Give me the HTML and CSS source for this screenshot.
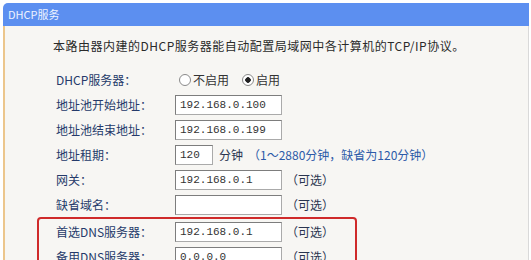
FILE: index.html
```html
<!DOCTYPE html>
<html lang="zh-CN">
<head>
    <meta charset="UTF-8">
    <title>DHCP服务</title>
    <link rel="stylesheet" href="styles.css">
</head>
<body>
    <div class="panel">
        <div class="panel-header">DHCP服务</div>
        <div class="panel-body">
            <p class="intro">本路由器内建的DHCP服务器能自动配置局域网中各计算机的TCP/IP协议。</p>

            <div class="row">
                <label class="label">DHCP服务器：</label>
                <label class="radio"><input type="radio" name="dhcp">不启用</label>
                <label class="radio"><input type="radio" name="dhcp" checked>启用</label>
            </div>
            <div class="row">
                <label class="label">地址池开始地址：</label>
                <input class="field" type="text" value="192.168.0.100">
            </div>
            <div class="row">
                <label class="label">地址池结束地址：</label>
                <input class="field" type="text" value="192.168.0.199">
            </div>
            <div class="row">
                <label class="label">地址租期：</label>
                <input class="field short" type="text" value="120">
                <span class="unit">分钟</span>
                <span class="hint">（1～2880分钟，缺省为120分钟）</span>
            </div>
            <div class="row">
                <label class="label">网关：</label>
                <input class="field" type="text" value="192.168.0.1">
                <span class="note">（可选）</span>
            </div>
            <div class="row">
                <label class="label">缺省域名：</label>
                <input class="field" type="text" value="">
                <span class="note">（可选）</span>
            </div>

            <!-- highlighted DNS settings -->
            <div class="highlight">
                <div class="row">
                    <label class="label">首选DNS服务器：</label>
                    <input class="field" type="text" value="192.168.0.1">
                    <span class="note">（可选）</span>
                </div>
                <div class="row">
                    <label class="label">备用DNS服务器：</label>
                    <input class="field" type="text" value="0.0.0.0">
                    <span class="note">（可选）</span>
                </div>
            </div>
        </div>
    </div>
</body>
</html>
```

FILE: styles.css
```css
body {
    margin: 0;
    padding: 3px 2px 0 3px;
    background: #ffffff;
    font-family: "Noto Sans CJK SC", "Noto Sans", sans-serif;
    font-size: 12px;
    color: #2a3550;
}
.panel {
    border-radius: 5px 0 0 0;
    overflow: hidden;
}
.panel-header {
    height: 23px;
    line-height: 23px;
    padding-left: 5px;
    background: #5c8ff0;
    color: #eef3ff;
    font-size: 11px;
}
.panel-body {
    border-left: 2px solid #ecc68c;
    border-right: 1px solid #d9d9d9;
    background: #f7f6f3;
    padding: 12px 0 10px 48px;
    height: 240px;
}
.intro {
    margin: 0 0 13px 0;
    font-size: 12px;
    line-height: 16px;
    color: #2a2a2a;
    letter-spacing: 0.5px;
}
.row {
    display: flex;
    align-items: center;
    height: 25px;
    margin-left: 3px;
}
.label {
    width: 119px;
    flex-shrink: 0;
    color: #253a6a;
}
.radio {
    display: flex;
    align-items: center;
    margin-left: 4px;
    margin-right: 9px;
    color: #333;
}
.radio input {
    appearance: none;
    width: 12px;
    height: 12px;
    margin: 0 2px 0 0;
    border: 1px solid #8a8a8a;
    border-radius: 50%;
    background: #ffffff;
    box-sizing: border-box;
}
.radio input:checked {
    background: radial-gradient(circle, #222 0, #222 2.5px, #fff 3px);
}
.field {
    box-sizing: border-box;
    width: 107px;
    height: 20px;
    padding: 0 4px;
    border: 1px solid #7d7d7d;
    border-right-color: #aaa;
    border-bottom-color: #aaa;
    background: #ffffff;
    font-family: "Liberation Mono", monospace;
    font-size: 11px;
    color: #333;
}
.field.short {
    width: 38px;
}
.unit {
    margin-left: 6px;
    color: #2a3550;
}
.hint {
    margin-left: 5px;
    color: #2c5aa8;
}
.note {
    margin-left: 4px;
    color: #2a3550;
}
.highlight {
    border: 2px solid #cf2a2a;
    border-radius: 4px;
    margin-left: -16px;
    padding-left: 14px;
    width: 302px;
}
```
